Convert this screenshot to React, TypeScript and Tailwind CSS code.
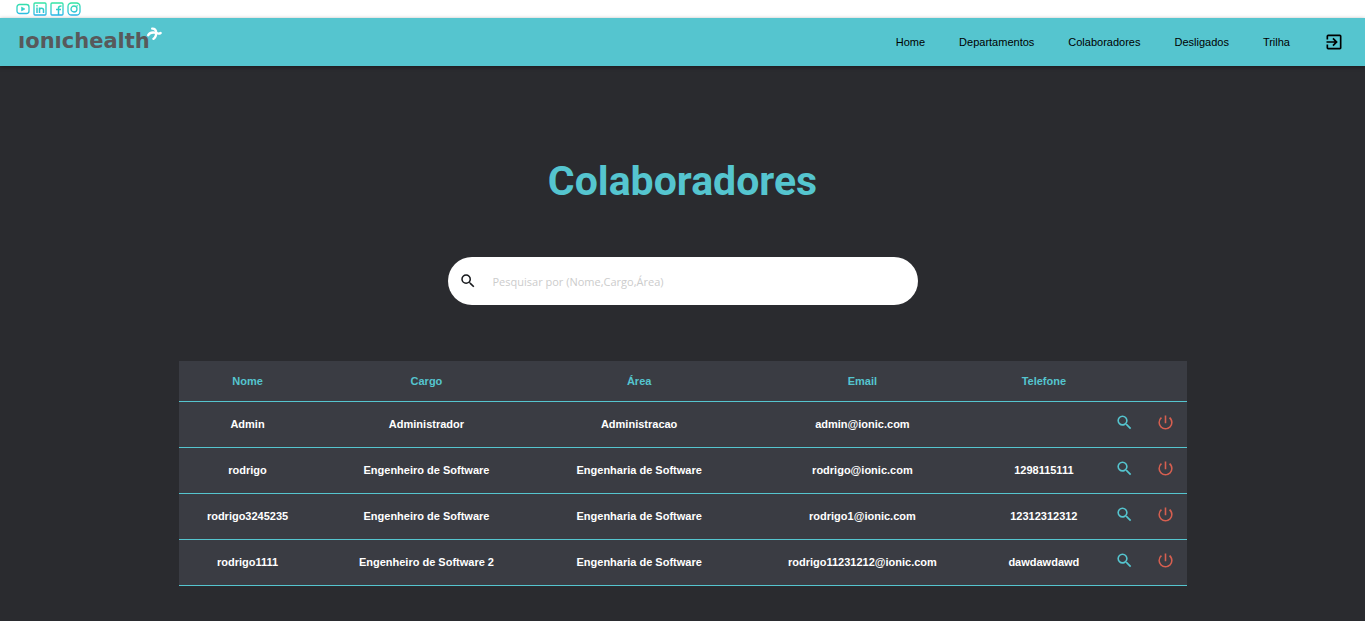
import React from "react";
import { MdExitToApp, MdPowerSettingsNew, MdSearch } from "react-icons/md";

type Employee = {
  nome: string;
  cargo: string;
  area: string;
  email: string;
  telefone: string;
};

const employees: Employee[] = [
  { nome: "Admin", cargo: "Administrador", area: "Administracao", email: "admin@ionic.com", telefone: "" },
  { nome: "rodrigo", cargo: "Engenheiro de Software", area: "Engenharia de Software", email: "rodrigo@ionic.com", telefone: "1298115111" },
  { nome: "rodrigo3245235", cargo: "Engenheiro de Software", area: "Engenharia de Software", email: "rodrigo1@ionic.com", telefone: "12312312312" },
  { nome: "rodrigo1111", cargo: "Engenheiro de Software 2", area: "Engenharia de Software", email: "rodrigo11231212@ionic.com", telefone: "dawdawdawd" },
];

const links = ["Home", "Departamentos", "Colaboradores", "Desligados", "Trilha"];

function SocialLink({ label, children }: { label: string; children: React.ReactNode }) {
  return (
    <a href="#" aria-label={label}>
      <svg viewBox="0 0 28 28" className="h-3.5 w-3.5" fill="none" stroke="url(#social)" strokeWidth="2.6">
        {children}
      </svg>
    </a>
  );
}

function SocialBar() {
  return (
    <div className="flex h-[18px] items-center gap-[3px] bg-white pl-4">
      <svg className="absolute h-0 w-0" aria-hidden="true">
        <defs>
          <linearGradient id="social" gradientUnits="userSpaceOnUse" x1="0" y1="0" x2="0" y2="28">
            <stop offset="0" stopColor="#35e8a0" />
            <stop offset="1" stopColor="#2cb4ee" />
          </linearGradient>
        </defs>
      </svg>
      <SocialLink label="YouTube">
        <rect x="2" y="5" width="24" height="18" rx="5" />
        <path d="M11 10l7 4-7 4z" fill="url(#social)" strokeWidth="1" />
      </SocialLink>
      <SocialLink label="LinkedIn">
        <rect x="2" y="2" width="24" height="24" rx="2" />
        <path d="M8 11v11M8 6v3M13 22V11M13 16c0-5 8-5 8 0v6" strokeWidth="3" />
      </SocialLink>
      <SocialLink label="Facebook">
        <rect x="2" y="2" width="24" height="24" rx="2" />
        <path d="M17 26V12c0-3 1-4 6-4M12 15h10" strokeWidth="3" />
      </SocialLink>
      <SocialLink label="Instagram">
        <rect x="2" y="2" width="24" height="24" rx="7" />
        <circle cx="14" cy="14" r="6" />
        <circle cx="20.5" cy="7.5" r="1" strokeWidth="1.5" />
      </SocialLink>
    </div>
  );
}

function Logo() {
  return (
    <a href="#" aria-label="ionichealth" className="flex items-start pb-0.5">
      <span className="font-['DejaVu_Sans'] text-[21px] leading-6 font-bold text-[#58595b]">ıonıchealth</span>
      <svg viewBox="0 0 15 14" className="-mt-0.5 -ml-[3px] h-3.5 w-[15px]" fill="none" stroke="#fff" strokeLinecap="round">
        <path d="M1.2 8.2C2.5 6 5 5.2 7.5 5.6S11.5 7.6 13.6 6" strokeWidth="2.4" />
        <path d="M5.2 1.6C7.6 1.4 9.2 3 9.2 5.6S8.2 11 6.4 11.8" strokeWidth="2.4" />
      </svg>
    </a>
  );
}

export default function App() {
  return (
    <div className="flex min-h-screen flex-col bg-[#2a2b2f] font-['Liberation_Sans',Arial,sans-serif] text-[11px]">
      <SocialBar />
      <header className="flex h-12 items-center justify-between bg-[#55c5cf] pr-[21px] pl-[18px] shadow-[0_1px_4px_rgba(0,0,0,0.4)]">
        <Logo />
        <nav className="flex items-center gap-[34px] text-black">
          {links.map((l) => (
            <a key={l} href="#" className="hover:underline">
              {l}
            </a>
          ))}
          <button type="button" aria-label="Sair">
            <MdExitToApp size={20} />
          </button>
        </nav>
      </header>

      <main className="flex flex-col items-center px-6 pt-[85px] pb-8">
        <h1 className="font-[Roboto] text-[41px] leading-[60px] font-bold text-[#55c5cf]">Colaboradores</h1>

        <label className="mt-[46px] flex h-12 w-full max-w-[470px] items-center gap-4 rounded-full bg-white px-[11px]">
          <MdSearch size={18} className="shrink-0 text-[#16181c]" aria-hidden="true" />
          <input
            type="text"
            aria-label="Pesquisar"
            placeholder="Pesquisar por (Nome,Cargo,Área)"
            className="min-w-0 flex-1 bg-transparent pt-0.5 font-['Open_Sans'] text-[11px] text-black outline-none placeholder:text-[#cccccc]"
          />
        </label>

        <table className="mt-14 w-full max-w-[1008px] table-fixed border-collapse bg-[#3a3c43] text-center font-bold text-white">
          <colgroup>
            <col className="w-[13.7%]" />
            <col className="w-[21.8%]" />
            <col className="w-[20.4%]" />
            <col className="w-[23.9%]" />
            <col className="w-[12.1%]" />
            <col className="w-[4%]" />
            <col className="w-[4.1%]" />
          </colgroup>
          <thead>
            <tr className="h-10 border-b border-[#55c5cf] text-[#55c5cf]">
              <th scope="col">Nome</th>
              <th scope="col">Cargo</th>
              <th scope="col">Área</th>
              <th scope="col">Email</th>
              <th scope="col">Telefone</th>
              <td />
              <td />
            </tr>
          </thead>
          <tbody>
            {employees.map((e) => (
              <tr key={e.nome} className="h-[46px] border-b border-[#55c5cf]">
                <td>{e.nome}</td>
                <td>{e.cargo}</td>
                <td>{e.area}</td>
                <td>{e.email}</td>
                <td>{e.telefone}</td>
                <td className="pb-1">
                  <button type="button" aria-label={"Ver " + e.nome} className="mx-auto block text-[#55c5cf]">
                    <MdSearch size={19} />
                  </button>
                </td>
                <td className="pb-1">
                  <button type="button" aria-label={"Desligar " + e.nome} className="mx-auto block text-[#d65f50]">
                    <MdPowerSettingsNew size={19} />
                  </button>
                </td>
              </tr>
            ))}
          </tbody>
        </table>
      </main>
    </div>
  );
}
